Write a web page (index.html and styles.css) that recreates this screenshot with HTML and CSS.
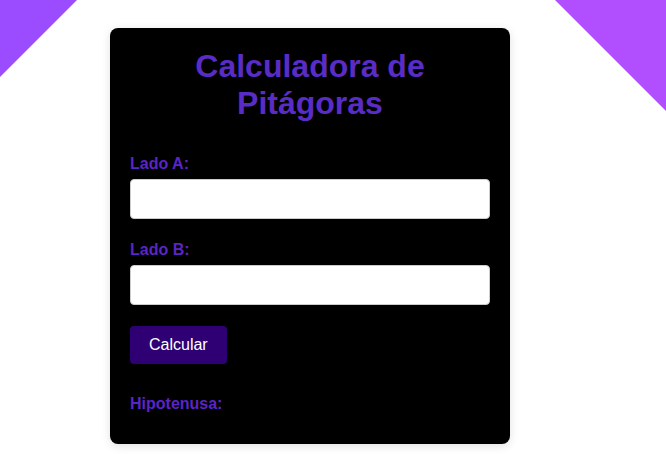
FILE: index.html
```html
<!DOCTYPE html>
<html lang="es">
<head>
<meta charset="utf-8">
<title>Calculadora de Pitágoras</title>
<link rel="stylesheet" href="styles.css">
</head>
<body>
<div class="corner corner-left"></div>
<div class="corner corner-right"></div>
<main class="card">
  <h1 class="title">Calculadora de Pitágoras</h1>
  <div class="group">
    <label class="label" for="a">Lado A:</label>
    <input class="input" id="a" type="number">
  </div>
  <div class="group">
    <label class="label" for="b">Lado B:</label>
    <input class="input" id="b" type="number">
  </div>
  <button class="btn" type="button">Calcular</button>
  <p class="result">Hipotenusa:</p>
</main>
</body>
</html>
```
FILE: styles.css
```css
* { box-sizing: border-box; }
html, body { margin: 0; padding: 0; }
body {
  background: #ffffff;
  font-family: "Liberation Sans", Arial, sans-serif;
  min-height: 454px;
  position: relative;
  overflow: hidden;
  padding-top: 28px;
}
.corner {
  position: absolute;
  top: 0;
}
.corner-left {
  left: 0;
  width: 77px;
  height: 77px;
  background: #9c4cff;
  clip-path: polygon(0 0, 100% 0, 0 100%);
}
.corner-right {
  right: 0;
  width: 111px;
  height: 111px;
  background: #b14fff;
  clip-path: polygon(0 0, 100% 0, 100% 100%);
}
.card {
  position: relative;
  width: 400px;
  margin: 0 0 0 110px;
  background: #000;
  border-radius: 8px;
  box-shadow: 0 2px 10px rgba(0, 0, 0, 0.12);
  padding: 20px 20px 30px;
}
.title {
  margin: 0 0 33px;
  font-size: 32px;
  line-height: 36.8px;
  font-weight: bold;
  text-align: center;
  color: #5a2cc6;
  padding: 0 60px;
}
.group { margin-bottom: 21.5px; }
.label {
  display: block;
  font-size: 16px;
  line-height: 18.4px;
  font-weight: bold;
  color: #5a24c8;
  margin-bottom: 6px;
}
.input {
  display: block;
  width: 100%;
  height: 40px;
  border: 1px solid #cccccc;
  border-radius: 4px;
  background: #fff;
  font-size: 16px;
  padding: 0 10px;
}
.btn {
  display: block;
  border: 0;
  border-radius: 4px;
  background: #2e0074;
  color: #fff;
  font-family: "Liberation Sans", Arial, sans-serif;
  font-size: 16px;
  line-height: 18.4px;
  padding: 10px 19px;
  height: 38px;
}
.result {
  margin: 31px 0 0;
  font-size: 16px;
  line-height: 18.4px;
  font-weight: bold;
  color: #5a24c8;
}
```
